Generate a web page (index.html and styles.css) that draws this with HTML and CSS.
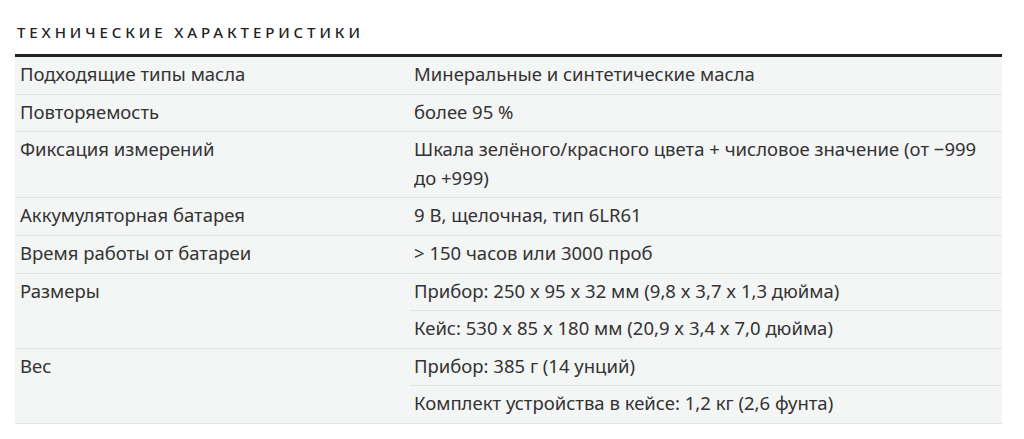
FILE: index.html
```html
<!DOCTYPE html>
<html lang="ru">
<head>
<meta charset="utf-8">
<link rel="stylesheet" href="styles.css">
</head>
<body>
<section class="specs">
  <h2 class="specs-title">ТЕХНИЧЕСКИЕ ХАРАКТЕРИСТИКИ</h2>
  <table class="specs-table">
    <tbody>
      <tr><th>Подходящие типы масла</th><td>Минеральные и синтетические масла</td></tr>
      <tr><th>Повторяемость</th><td>более 95 %</td></tr>
      <tr><th>Фиксация измерений</th><td>Шкала зелёного/красного цвета + числовое значение (от −999 до +999)</td></tr>
      <tr><th>Аккумуляторная батарея</th><td>9 В, щелочная, тип 6LR61</td></tr>
      <tr><th>Время работы от батареи</th><td>&gt; 150 часов или 3000 проб</td></tr>
      <tr><th rowspan="2">Размеры</th><td>Прибор: 250 x 95 x 32 мм (9,8 x 3,7 x 1,3 дюйма)</td></tr>
      <tr><td>Кейс: 530 x 85 x 180 мм (20,9 x 3,4 x 7,0 дюйма)</td></tr>
      <tr><th rowspan="2">Вес</th><td>Прибор: 385 г (14 унций)</td></tr>
      <tr><td>Комплект устройства в кейсе: 1,2 кг (2,6 фунта)</td></tr>
    </tbody>
  </table>
</section>
</body>
</html>
```

FILE: styles.css
```css
html, body {
  margin: 0;
  padding: 0;
  background: #ffffff;
}

.specs {
  width: 987px;
  margin-left: 15px;
  padding-top: 22px;
  font-family: "Noto Sans", "Open Sans", sans-serif;
  color: #333333;
}

.specs-title {
  margin: 0 0 12px 2px;
  font-size: 15px;
  font-weight: 500;
  letter-spacing: 3.9px;
  line-height: 20px;
  color: #222222;
}

.specs-table {
  width: 100%;
  border-collapse: collapse;
  border-top: 3px solid #222222;
  background: #f4f5f5;
}

.specs-table th,
.specs-table td {
  text-align: left;
  vertical-align: top;
  font-weight: 400;
  font-size: 18.5px;
  line-height: 28.6px;
  padding: 3px 4px 5px 4px;
  border-bottom: 1px solid #e0e3e6;
}

.specs-table th {
  width: 386px;
  padding-left: 5px;
}
```
